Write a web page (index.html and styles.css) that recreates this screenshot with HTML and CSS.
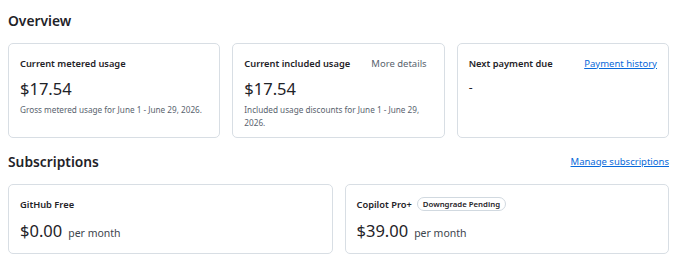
FILE: index.html
```html
<!DOCTYPE html>
<html lang="en">
<head>
    <meta charset="UTF-8">
    <meta name="viewport" content="width=device-width, initial-scale=1.0">
    <title>Billing Overview</title>
    <link rel="stylesheet" href="styles.css">
</head>
<body>
    <div class="page">
        <div class="section-head">
            <h2>Overview</h2>
        </div>
        <div class="overview-grid">
            <div class="card">
                <div class="card-head">
                    <span class="card-title">Current metered usage</span>
                </div>
                <div class="amount">$17.54</div>
                <p class="note">Gross metered usage for June 1 - June 29, 2026.</p>
            </div>
            <div class="card">
                <div class="card-head">
                    <span class="card-title">Current included usage</span>
                    <span class="more">More details</span>
                </div>
                <div class="amount">$17.54</div>
                <p class="note">Included usage discounts for June 1 - June 29, 2026.</p>
            </div>
            <div class="card">
                <div class="card-head">
                    <span class="card-title">Next payment due</span>
                    <a href="#" class="link">Payment history</a>
                </div>
                <div class="dash">-</div>
            </div>
        </div>

        <div class="section-head subs-head">
            <h2>Subscriptions</h2>
            <a href="#" class="link">Manage subscriptions</a>
        </div>
        <div class="subs-grid">
            <div class="card sub-card">
                <div class="card-head">
                    <span class="card-title">GitHub Free</span>
                </div>
                <div class="price"><span class="amount">$0.00</span><span class="period">per month</span></div>
            </div>
            <div class="card sub-card">
                <div class="card-head start">
                    <span class="card-title">Copilot Pro+</span>
                    <span class="badge">Downgrade Pending</span>
                </div>
                <div class="price"><span class="amount">$39.00</span><span class="period">per month</span></div>
            </div>
        </div>
    </div>
</body>
</html>
```

FILE: styles.css
```css
body {
    margin: 0;
    font-family: "Noto Sans", "Open Sans", sans-serif;
    color: #1f2328;
    background: #ffffff;
}
.page {
    padding: 10px 11px 8px 8px;
}
.section-head {
    display: flex;
    justify-content: space-between;
    align-items: center;
    height: 20px;
    margin-bottom: 13px;
}
.section-head h2 {
    margin: 0;
    font-size: 13.8px;
    font-weight: 600;
}
.subs-head {
    margin-top: 13px;
    margin-bottom: 13px;
}
.overview-grid {
    display: grid;
    grid-template-columns: repeat(3, minmax(0, 1fr));
    gap: 12px;
}
.subs-grid {
    display: grid;
    grid-template-columns: repeat(2, minmax(0, 1fr));
    gap: 12px;
}
.card {
    border: 1px solid #d8dee4;
    border-radius: 5px;
    padding: 11px 11px 0;
    height: 95px;
    box-sizing: border-box;
}
.sub-card {
    height: 70px;
}
.card-head {
    display: flex;
    justify-content: space-between;
    align-items: center;
    height: 16px;
}
.card-head.start {
    justify-content: flex-start;
    gap: 5px;
}
.card-title {
    font-size: 9.3px;
    font-weight: 600;
}
.more {
    font-size: 9.5px;
    color: #59636e;
    margin-right: 6px;
}
.link {
    font-size: 9.5px;
    color: #0969da;
    text-decoration: underline;
}
.amount {
    font-size: 16.5px;
    line-height: 24px;
    margin-top: 6px;
}
.note {
    margin: 2px 0 0;
    font-size: 8.2px;
    line-height: 13px;
    color: #59636e;
}
.dash {
    margin-top: 8px;
    font-size: 12px;
}
.price {
    display: flex;
    align-items: baseline;
    gap: 6px;
    margin-top: 7px;
}
.price .amount {
    margin-top: 0;
}
.period {
    font-size: 10.5px;
    color: #3d444d;
}
.badge {
    font-size: 7.8px;
    font-weight: 600;
    border: 1px solid #d1d9e0;
    border-radius: 8px;
    padding: 0 5px;
    line-height: 12px;
}
```
